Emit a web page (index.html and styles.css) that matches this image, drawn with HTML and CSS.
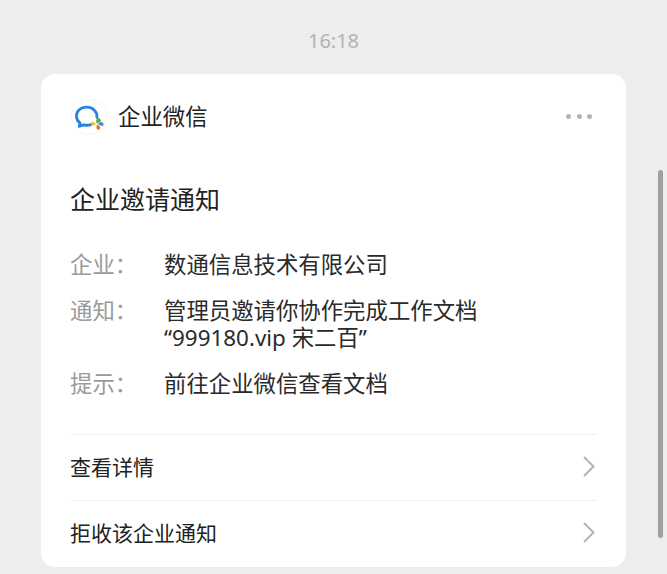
FILE: index.html
```html
<!DOCTYPE html>
<html lang="zh">
<head>
<meta charset="utf-8">
<title>企业微信</title>
<link rel="stylesheet" href="styles.css">
</head>
<body>
<div class="time">16:18</div>
<main class="card">
  <header class="head">
    <svg class="logo" width="36" height="36" viewBox="0 0 36 36" aria-hidden="true">
      <circle cx="18" cy="18" r="17.5" fill="#fff" stroke="#f5f5f5"/>
      <path d="M26 18.5C26.3 12.2 21.5 8.2 15.5 8.2C9.6 8.2 5.4 12.2 5.4 17C5.4 20 6.9 22.4 9 23.9L8.2 27.4L12.6 25.8C15.2 26.5 17.6 26.4 19.8 25.6" fill="none" stroke="#2a83e0" stroke-width="2.8" stroke-linecap="round" stroke-linejoin="round"/>
      <path d="M25.4 24.2C24.8 21.8 25.4 19.6 27 19.2C28.8 18.9 30.4 20.6 29.8 22.2C29.4 23.2 27.2 23.2 25.4 24.2Z" fill="#5aa83c"/>
      <path d="M25 25C23.2 23.4 22.4 22.2 20.9 22.4C19.6 23.2 19.8 25.6 21.2 26.4C22.4 27 24 26.2 25 25Z" fill="#f5c033"/>
      <path d="M25.8 25.6C25.4 27 25.2 29.4 26.2 30.6C27.4 31.3 29.2 30.2 29.2 28.6C29 27.2 27.2 26.2 25.8 25.6Z" fill="#e9702c"/>
      <path d="M26.4 24.8C28 24 29.2 22.8 31 23.2C32.8 23.8 33 25.8 32 26.8C30.8 27.4 28.2 25.8 26.4 24.8Z" fill="#3d8fe0"/>
    </svg>
    <span class="brand">企业微信</span>
    <div class="more" aria-label="更多"><i></i><i></i><i></i></div>
  </header>
  <h1 class="title">企业邀请通知</h1>
  <dl class="info">
    <div class="row"><dt>企业：</dt><dd>数通信息技术有限公司</dd></div>
    <div class="row"><dt>通知：</dt><dd>管理员邀请你协作完成工作文档<br>“999180.vip 宋二百”</dd></div>
    <div class="row"><dt>提示：</dt><dd>前往企业微信查看文档</dd></div>
  </dl>
  <nav class="links">
    <a class="link">查看详情<svg class="chev" width="12" height="21" viewBox="0 0 12 21" aria-hidden="true"><path d="M1 1L10.5 10.5L1 20" fill="none" stroke="#b4b4b4" stroke-width="2"/></svg></a>
    <a class="link">拒收该企业通知<svg class="chev" width="12" height="21" viewBox="0 0 12 21" aria-hidden="true"><path d="M1 1L10.5 10.5L1 20" fill="none" stroke="#b4b4b4" stroke-width="2"/></svg></a>
  </nav>
</main>
<div class="scrollbar"></div>
</body>
</html>
```
FILE: styles.css
```css
html, body {
  margin: 0;
  height: 574px;
  overflow: hidden;
}
body {
  background: #ededed;
  font-family: "Noto Sans", "Noto Sans CJK SC", sans-serif;
  padding: 0 41px;
  position: relative;
  box-sizing: border-box;
}
.time {
  height: 74px;
  padding-top: 27px;
  box-sizing: border-box;
  text-align: center;
  font-size: 20px;
  line-height: 28px;
  color: #b2b2b2;
}
.card {
  width: 585px;
  height: 493px;
  box-sizing: border-box;
  background: #fff;
  border-radius: 14px;
  padding: 0 29px;
}
.head {
  display: flex;
  align-items: center;
  height: 85px;
}
.logo {
  margin-left: 1px;
  margin-right: 11px;
  flex: none;
}
.brand {
  flex: 1;
  font-size: 22.4px;
  line-height: 30px;
  color: #222;
}
.more {
  display: flex;
  gap: 5.5px;
  margin-right: 5px;
}
.more i {
  width: 5px;
  height: 5px;
  border-radius: 50%;
  background: #b4b4b4;
}
.title {
  margin: 22px 0 0;
  font-size: 25px;
  line-height: 36px;
  font-weight: 400;
  color: #222;
}
.info {
  margin: 34px 0 0;
}
.row {
  display: flex;
  margin-bottom: 19px;
  font-size: 22.4px;
  line-height: 27px;
}
.row dt {
  width: 94px;
  flex: none;
  color: #9a9a9a;
}
.row dd {
  margin: 0;
  color: #2a2a2a;
}
.links {
  margin-top: 37px;
}
.link {
  display: flex;
  align-items: center;
  justify-content: space-between;
  height: 66px;
  padding-bottom: 3px;
  border-top: 1px solid #f0f0f0;
  box-sizing: border-box;
  font-size: 21px;
  color: #222;
}
.chev {
  margin-right: 2px;
}
.scrollbar {
  position: absolute;
  left: 658px;
  top: 170px;
  width: 4.5px;
  height: 368px;
  border-radius: 3px;
  background: #a0a0a0;
}
```
